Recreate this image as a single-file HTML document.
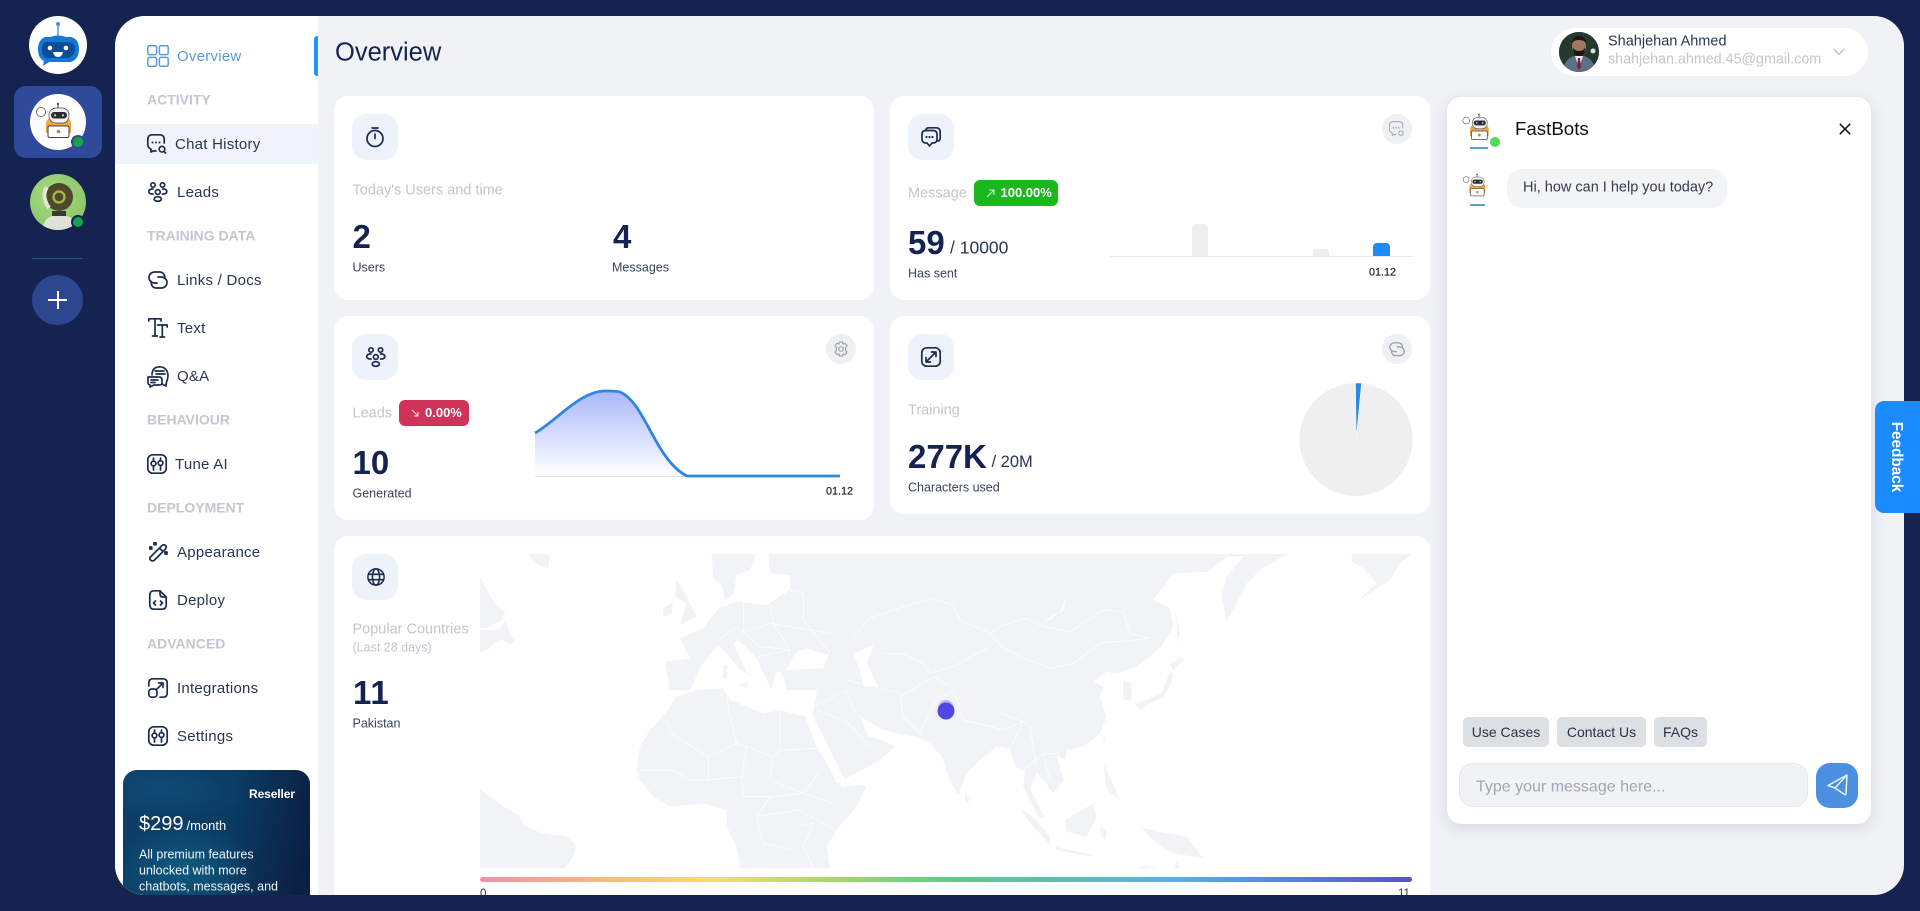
<!DOCTYPE html>
<html lang="en"><head><meta charset="utf-8"><title>Overview</title>
<style>
*{box-sizing:border-box}
html,body{margin:0;padding:0;width:1920px;height:911px;overflow:hidden;background:#14234f;font-family:"Liberation Sans",sans-serif}
.a{position:absolute}
.t{position:absolute;white-space:nowrap;transform:translateY(-50%);line-height:1.2}
#panel{position:absolute;left:115px;top:16px;width:1789px;height:879px;background:#f0f2f6;border-radius:30px;overflow:hidden}
#inner{position:absolute;left:-115px;top:-16px;width:1920px;height:911px}
.nav{font-size:15px;letter-spacing:.25px;color:#2a3553;margin-top:1px}
.sec{font-size:14px;font-weight:bold;color:#c3c7cf}
.card{position:absolute;background:#fff;border-radius:14px}
.ib{position:absolute;width:46px;height:46px;border-radius:14px;background:#eef2fa}
.cb{position:absolute;width:30px;height:30px;border-radius:50%;background:#eff0f4}
.lab{font-size:14.5px;color:#c2c6cd;margin-top:1px}
.big{font-size:33px;font-weight:bold;color:#14234f}
.sub{font-size:12.5px;color:#3a4358}
.sm{font-size:17.5px;color:#2a3553}
.bd{position:absolute;height:26px;border-radius:6px;color:#fff;font-weight:bold;font-size:13px}
.ch{position:absolute;top:717px;height:30px;border-radius:5px;background:#dcdfe3;font-size:14px;color:#2b3347;line-height:30px;text-align:center}
svg{position:absolute;overflow:visible}
.s{fill:none;stroke:#1e2b4f;stroke-width:1.7;stroke-linecap:round;stroke-linejoin:round}
.g{fill:none;stroke:#9ea3ad;stroke-width:1.2;stroke-linecap:round;stroke-linejoin:round}
</style></head>
<body>
<svg width="0" height="0" style="position:absolute">
<defs>
<symbol id="bot" viewBox="-28 -28 56 56" overflow="visible">
 <circle cx="-17" cy="-10" r="4.6" fill="#fff" stroke="#555" stroke-width=".8"/>
 <path d="M-12 3 Q-12 -5 -4 -4 L6 -4 Q13 -5 13 3 L13 11 L-12 11Z" fill="#f0a63a"/>
 <path d="M0 -14V-18" stroke="#333" stroke-width="1"/><circle cx="0" cy="-18" r="1.2" fill="#555"/>
 <rect x="-9" y="-14" width="20" height="15" rx="7" fill="#f4f4f4" stroke="#444" stroke-width=".7"/>
 <rect x="-7" y="-10" width="16" height="6.500" rx="3" fill="#2b2b33"/>
 <circle cx="-3" cy="-6.700" r="1.1" fill="#ddd"/><circle cx="5" cy="-6.700" r="1.1" fill="#ddd"/>
 <rect x="-10" y="4" width="21" height="11.500" rx="1.5" fill="#fff" stroke="#444" stroke-width="1"/>
 <circle cx="0.5" cy="9.500" r="1.8" fill="#b58a2a"/>
</symbol>
<symbol id="leads" viewBox="0 0 20 20" overflow="visible">
 <g class="s"><circle cx="5" cy="3" r="2.2"/><circle cx="14.5" cy="3" r="2.2"/><circle cx="9.8" cy="10" r="2.4"/><ellipse cx="9.8" cy="17" rx="3.6" ry="2.3"/><path d="M5 7H3.5Q.8 7.5 .8 9.5T3.5 12H5M14.5 7H16Q18.8 7.5 18.8 9.5T16 12H14.5"/></g>
</symbol>
<symbol id="link" viewBox="0 0 20 20" overflow="visible">
 <path d="M9 12H6.500A5.500 5.500 0 0 1 6.500 1H12A5 5 0 0 1 16.500 7.500M10 6H13.500A5.500 5.500 0 0 1 13.500 17H8A5 5 0 0 1 3.500 10.500" fill="none" stroke="currentColor" stroke-width="1.700" stroke-linecap="round"/>
</symbol>
<symbol id="tune" viewBox="0 0 20 20" overflow="visible">
 <g class="s"><rect x=".8" y=".8" width="18.4" height="18.4" rx="5"/><path d="M6.5 4V7M6.5 12V16M13.5 4V6.5M13.5 11.5V16"/><circle cx="6.5" cy="9.5" r="2.4"/><circle cx="13.5" cy="9" r="2.4"/></g>
</symbol>
</defs>
</svg>

<!-- Left rail -->
<div class="a" style="left:29px;top:16px;width:58px;height:58px;border-radius:50%;background:#fff"></div>
<svg style="left:29px;top:16px" width="58" height="58" viewBox="0 0 58 58">
 <path d="M29 8V21" stroke="#4a90d9" stroke-width="1.4"/><circle cx="29" cy="8" r="2" fill="#4a90d9"/>
 <path d="M21 21Q29 18 37 21H42Q50 23 50 33T42 46H20L14 50L15 45Q9 42 9 33T16 21Z" fill="#1478d8"/>
 <path d="M18 26H40Q46 27 46 33T40 42H18Q13 41 13 33T18 26Z" fill="#0e4c96"/>
 <circle cx="21" cy="32" r="2.300" fill="#fff"/><circle cx="37" cy="32" r="2.300" fill="#fff"/>
 <path d="M24 36H34Q33 41 29 41T24 36Z" fill="#fff"/>
</svg>
<div class="a" style="left:14px;top:86px;width:88px;height:72px;border-radius:12px;background:#2f4a9a"></div>
<div class="a" style="left:30px;top:94px;width:56px;height:56px;border-radius:50%;background:#fff"></div>
<svg style="left:30px;top:94px" width="56" height="56"><use href="#bot" width="56" height="56"/></svg>
<div class="a" style="left:71px;top:135px;width:14px;height:14px;border-radius:50%;background:#16a34a;border:2px solid #2f4a9a"></div>
<div class="a" style="left:30px;top:174px;width:56px;height:56px;border-radius:50%;background:radial-gradient(circle at 40% 40%,#a9d988,#8cc868 70%);overflow:hidden"></div>
<svg style="left:30px;top:174px" width="56" height="56" viewBox="0 0 56 56">
 <defs><clipPath id="ast"><circle cx="28" cy="28" r="28"/></clipPath></defs>
 <g clip-path="url(#ast)">
 <path d="M12 56Q14 44 22 42H36Q46 44 48 56Z" fill="#dfe2d6"/><rect x="22" y="37" width="14" height="5" fill="#3a3a34"/>
 <ellipse cx="29" cy="23" rx="14" ry="14" fill="#4c4a2a"/><path d="M17 13Q11 22 19 34" fill="none" stroke="#e4e6d2" stroke-width="4"/>
 <circle cx="29" cy="23" r="5.500" fill="none" stroke="#a8b24a" stroke-width="2.400"/>
 </g>
</svg>
<div class="a" style="left:71px;top:215px;width:14px;height:14px;border-radius:50%;background:#16a34a;border:2px solid #14234f"></div>
<div class="a" style="left:32px;top:258px;width:51px;height:1px;background:#2f4a9a"></div>
<div class="a" style="left:32px;top:275px;width:51px;height:50px;border-radius:50%;background:#2d4690"></div>
<div class="a" style="left:48px;top:299px;width:19px;height:1.6px;background:#fff"></div>
<div class="a" style="left:57px;top:291px;width:1.6px;height:18px;background:#fff"></div>

<div id="panel"><div id="inner">
 <!-- Sidebar -->
 <div class="a" style="left:115px;top:0;width:203px;height:911px;background:#fff"></div>
 <div class="a" style="left:314px;top:36px;width:4px;height:40px;background:#2196f3;border-radius:3px 0 0 3px"></div>
 <div class="a" style="left:115px;top:124px;width:203px;height:40px;background:#f0f3f9"></div>

 <svg style="left:147px;top:45px" width="22" height="22" fill="none" stroke="#5a9bd8" stroke-width="1.5"><rect x=".8" y=".8" width="8.8" height="8.8" rx="1.5"/><rect x="12.4" y=".8" width="8.8" height="8.8" rx="1.5"/><rect x=".8" y="12.4" width="8.8" height="8.8" rx="1.5"/><rect x="12.4" y="12.4" width="8.8" height="8.8" rx="1.5"/></svg>
 <div class="t nav" style="left:177px;top:56px;color:#5a9bd8">Overview</div>
 <div class="t sec" style="left:147px;top:100px">ACTIVITY</div>

 <svg class="s" style="left:147px;top:134px" width="20" height="20" viewBox="0 0 20 20"><path d="M9 17H6L4 18V15Q1 14 .8 11V5Q1 1 5 .8H13Q17 1 17.2 5V9"/><path d="M5.5 8.5h.01M9 8.5h.01M12.5 8.5h.01" stroke-width="2"/><circle cx="15" cy="15.2" r="2.8"/><path d="M17 17.4L18.6 19"/></svg>
 <div class="t nav" style="left:175px;top:144px">Chat History</div>
 <svg style="left:148px;top:182px" width="20" height="20"><use href="#leads" width="20" height="20"/></svg>
 <div class="t nav" style="left:177px;top:192px">Leads</div>
 <div class="t sec" style="left:147px;top:236px">TRAINING DATA</div>
 <svg style="left:148px;top:271px;color:#1e2b4f" width="20" height="20"><use href="#link" width="20" height="20"/></svg>
 <div class="t nav" style="left:177px;top:280px">Links / Docs</div>
 <svg class="s" style="left:148px;top:318px" width="20" height="20" viewBox="0 0 20 20"><path d="M.8 3V.8H13V3M7 .8V18M4.5 18H9.5M9.5 7H19.2V9M14.3 7V19M12 19H16.5"/></svg>
 <div class="t nav" style="left:177px;top:328px">Text</div>
 <svg class="s" style="left:147px;top:366px" width="22" height="22" viewBox="0 0 22 22"><path d="M5 9Q5 1 12.5 .8Q20 1 21 9Q21 13 19.5 16L19 20L15 18"/><path d="M8 5H17M9 8H18"/><path d="M1 11H12Q15 11 15 14V17Q15 19 12 19H7L3 21V19Q1 18.5 1 17Z"/><path d="M4 14H11M4 16.5H8"/></svg>
 <div class="t nav" style="left:177px;top:376px">Q&amp;A</div>
 <div class="t sec" style="left:147px;top:420px">BEHAVIOUR</div>
 <svg style="left:147px;top:454px" width="20" height="20"><use href="#tune" width="20" height="20"/></svg>
 <div class="t nav" style="left:175px;top:464px">Tune AI</div>
 <div class="t sec" style="left:147px;top:508px">DEPLOYMENT</div>
 <svg class="s" style="left:149px;top:542px" width="19" height="20" viewBox="0 0 19 20"><path d="M1.5 15L13 3.5Q15 2 16.5 3.5T16.500 7L5 18.500Q3 19.500 1.500 18T1.500 15ZM10.500 6L14 9.500"/><path d="M5 .8h2v2H5zM.8 5h2v2h-2zM16 10h2v2h-2z" fill="#1e2b4f"/></svg>
 <div class="t nav" style="left:177px;top:552px">Appearance</div>
 <svg class="s" style="left:149px;top:590px" width="18" height="20" viewBox="0 0 18 20"><path d="M11 .8H5Q.8 .8 .8 5V15Q.8 19.200 5 19.200H13Q17.200 19.200 17.200 15V7H14Q11 7 11 4Z"/><path d="M11 .8L17.200 7M6.500 11L4.500 13L6.500 15M11.500 11L13.500 13L11.500 15"/></svg>
 <div class="t nav" style="left:177px;top:600px">Deploy</div>
 <div class="t sec" style="left:147px;top:644px">ADVANCED</div>
 <svg class="s" style="left:148px;top:678px" width="20" height="20" viewBox="0 0 20 20"><path d="M.8 8V5Q.8 .8 5 .8H15Q19.200 .8 19.200 5V15Q19.200 19.200 15 19.200H12"/><rect x=".8" y="11" width="8.200" height="8.200" rx="3"/><path d="M9 11L15 5M10.500 5H15V9.500"/></svg>
 <div class="t nav" style="left:177px;top:688px">Integrations</div>
 <svg style="left:148px;top:726px" width="20" height="20"><use href="#tune" width="20" height="20"/></svg>
 <div class="t nav" style="left:177px;top:736px">Settings</div>

 <div class="a" style="left:123px;top:770px;width:187px;height:140px;border-radius:14px;overflow:hidden;background:radial-gradient(ellipse 70px 50px at 60px 100px,#0f5a7d,transparent),radial-gradient(ellipse 90px 30px at 40px 20px,#0f4a74,transparent),linear-gradient(100deg,#0e3e68,#0b3b63 55%,#0b1f41 95%)"></div>
 <div class="t" style="left:249px;top:794px;font-size:12px;letter-spacing:-.1px;font-weight:bold;color:#fff">Reseller</div>
 <div class="t" style="left:139px;top:824px;font-size:20px;color:#fff">$299<span style="font-size:13px;margin-left:3px">/month</span></div>
 <div class="t" style="left:139px;top:854.500px;font-size:12.500px;color:#eef4f8">All premium features</div>
 <div class="t" style="left:139px;top:870.500px;font-size:12.500px;color:#eef4f8">unlocked with more</div>
 <div class="t" style="left:139px;top:886.500px;font-size:12.500px;color:#eef4f8">chatbots, messages, and</div>

 <!-- Header -->
 <div class="t" style="left:335px;top:53px;font-size:25.500px;color:#14234f">Overview</div>
 <div class="a" style="left:1551px;top:28px;width:317px;height:48px;border-radius:24px;background:#fff"></div>
 <div class="a" style="left:1559px;top:32px;width:40px;height:40px;border-radius:50%;background:#1f3a2c;overflow:hidden"></div>
 <svg style="left:1559px;top:32px" width="40" height="40" viewBox="0 0 40 40"><defs><clipPath id="av"><circle cx="20" cy="20" r="20"/></clipPath></defs><g clip-path="url(#av)"><rect width="40" height="40" fill="#25392f"/><path d="M4 40Q5 27 15 24L25 24Q35 27 37 40Z" fill="#5d6e88"/><path d="M16 24L20 36L24 24Z" fill="#e9e9ec"/><path d="M19 26H21L22 35L20 38L18 35Z" fill="#7c2434"/><ellipse cx="20" cy="14" rx="7" ry="9" fill="#a07a60"/><path d="M13 12Q13 4 20 4T27 12Q26 8 20 8T13 12ZM14 15Q14 24 20 24T26 15Q25 19 20 19T14 15Z" fill="#1c1512"/><circle cx="34" cy="19" r="2.500" fill="#cfe4e4"/></g></svg>
 <div class="t" style="left:1608px;top:41.500px;font-size:14.500px;color:#2a3553">Shahjehan Ahmed</div>
 <div class="t" style="left:1608px;top:59.500px;font-size:14.300px;color:#c2c6cd">shahjehan.ahmed.45@gmail.com</div>
 <svg style="left:1833px;top:48px" width="12" height="8" fill="none" stroke="#c2c6cd" stroke-width="1.500"><path d="M.8 1L6 6.500L11.200 1"/></svg>

 <!-- Card 1 -->
 <div class="card" style="left:334px;top:96px;width:540px;height:204px"></div>
 <div class="ib" style="left:352px;top:114px"></div>
 <svg class="s" style="left:366px;top:126px" width="18" height="22" viewBox="0 0 18 22"><circle cx="9" cy="12.500" r="8"/><path d="M6 2H12M9 8V12.500"/></svg>
 <div class="t lab" style="left:352.500px;top:190px">Today's Users and time</div>
 <div class="t big" style="left:352.500px;top:237px">2</div>
 <div class="t big" style="left:613px;top:237px">4</div>
 <div class="t sub" style="left:352.500px;top:268px">Users</div>
 <div class="t sub" style="left:612px;top:268px">Messages</div>

 <!-- Card 2 -->
 <div class="card" style="left:890px;top:96px;width:540px;height:204px"></div>
 <div class="ib" style="left:908px;top:114px"></div>
 <svg class="s" style="left:921px;top:127px" width="20" height="20" viewBox="0 0 20 20"><path d="M5 3V3Q5 .8 8 .8H15Q19.200 .8 19.200 5V11Q19.200 14 16.500 14"/><path d="M5 3.500H12Q16 3.500 16 7.500V12Q16 16 12 16H11L8.500 19L6 16H5Q1 16 1 12V7.500Q1 3.500 5 3.500Z"/><path d="M5.500 10h.01M8.500 10h.01M11.500 10h.01" stroke-width="2.200"/></svg>
 <div class="cb" style="left:1382px;top:114px"></div>
 <svg class="g" style="left:1389px;top:121px" width="16" height="16" viewBox="0 0 20 20"><path d="M9 17H6L4 18V15Q1 14 .8 11V5Q1 1 5 .8H13Q17 1 17.200 5V9"/><path d="M5.500 8.500h.01M9 8.500h.01M12.500 8.500h.01" stroke-width="2"/><circle cx="15" cy="15.200" r="2.800"/></svg>
 <div class="t lab" style="left:908px;top:193px">Message</div>
 <div class="bd" style="left:974px;top:180px;width:84px;background:#1cb71f"></div>
 <svg style="left:986px;top:189px" width="9" height="9" fill="none" stroke="#cdeccd" stroke-width="1.100"><path d="M1 8L8 1M3 1H8V6"/></svg>
 <div class="t" style="left:1000.500px;top:193px;font-size:13px;font-weight:bold;color:#fff">100.00%</div>
 <div class="t big" style="left:908px;top:243px">59</div>
 <div class="t sm" style="left:950px;top:248px">/ 10000</div>
 <div class="t sub" style="left:908px;top:274px">Has sent</div>
 <div class="a" style="left:1110px;top:256px;width:302px;height:1px;background:#e3e5ea"></div>
 <div class="a" style="left:1192px;top:224px;width:16px;height:32px;background:#eeeff1;border-radius:4px 4px 0 0"></div>
 <div class="a" style="left:1313px;top:249px;width:16px;height:7px;background:#eeeff1;border-radius:3px 3px 0 0"></div>
 <div class="a" style="left:1373px;top:243px;width:17px;height:13px;background:#1a8cff;border-radius:4px 4px 0 0"></div>
 <div class="t" style="left:1369px;top:273px;font-size:10.800px;color:#1a2030;-webkit-text-stroke:.2px #1a2030">01.12</div>

 <!-- Card 3 -->
 <div class="card" style="left:334px;top:316px;width:540px;height:204px"></div>
 <div class="ib" style="left:352px;top:334px"></div>
 <svg style="left:366px;top:347px" width="20" height="20"><use href="#leads" width="20" height="20"/></svg>
 <div class="cb" style="left:826px;top:334px"></div>
 <svg class="g" style="left:833px;top:341px" width="16" height="16" viewBox="0 0 16 16"><circle cx="8" cy="8" r="2.300"/><path d="M6.500 1H9.500L10 3L12 2.300L14 5L12.600 6.500V9.500L14 11L12 13.700L10 13L9.500 15H6.500L6 13L4 13.700L2 11L3.400 9.500V6.500L2 5L4 2.300L6 3Z"/></svg>
 <div class="t lab" style="left:352.500px;top:412.500px">Leads</div>
 <div class="bd" style="left:399px;top:400px;width:70px;background:#cf3358"></div>
 <svg style="left:411px;top:409px" width="8" height="8" fill="none" stroke="#f5d0da" stroke-width="1.100"><path d="M1 1L7 7M3 7H7V3"/></svg>
 <div class="t" style="left:425px;top:413px;font-size:13px;font-weight:bold;color:#fff">0.00%</div>
 <div class="t big" style="left:352.500px;top:463px">10</div>
 <div class="t sub" style="left:352.500px;top:494px">Generated</div>
 <svg style="left:0;top:0" width="1920" height="911">
  <defs><linearGradient id="ar" x1="0" y1="0" x2="0" y2="1"><stop offset="0" stop-color="#a9b8fb"/><stop offset="1" stop-color="#ffffff"/></linearGradient></defs>
  <path d="M535 433C555 422 580 391 605 391C612 391 617 391 620 392C645 402 655 460 687 476L535 476Z" fill="url(#ar)"/>
  <path d="M535 476.500H687" stroke="#e1e3e8" stroke-width="1"/>
  <path d="M535 433C555 422 580 391 605 391C612 391 617 391 620 392C645 402 655 460 687 476L840 476" fill="none" stroke="#2f86e0" stroke-width="2.800"/>
 </svg>
 <div class="t" style="left:826px;top:492px;font-size:10.800px;color:#1a2030;-webkit-text-stroke:.2px #1a2030">01.12</div>

 <!-- Card 4 -->
 <div class="card" style="left:890px;top:316px;width:540px;height:198px"></div>
 <div class="ib" style="left:908px;top:334px"></div>
 <svg class="s" style="left:921px;top:347px" width="20" height="20" viewBox="0 0 20 20"><rect x=".8" y=".8" width="18.400" height="18.400" rx="5"/><path d="M5 15L15 5M10.500 5H15V9.500M5 10.500V15H9.500"/></svg>
 <div class="cb" style="left:1382px;top:334px"></div>
 <svg style="left:1389px;top:342px;color:#9ea3ad" width="16" height="16"><use href="#link" width="16" height="16"/></svg>
 <div class="t lab" style="left:908px;top:409.500px">Training</div>
 <div class="t big" style="left:908px;top:457px">277K</div>
 <div class="t" style="left:991.500px;top:463px;font-size:16.500px;color:#2a3553">/ 20M</div>
 <div class="t sub" style="left:908px;top:488px">Characters used</div>
 <svg style="left:0;top:0" width="1920" height="911"><circle cx="1356" cy="439.500" r="56.500" fill="#efeff0"/><path d="M1355.500 383H1361.500L1356.300 438Z" fill="#2f86e0" stroke="#fff" stroke-width=".5"/></svg>

 <!-- Map card -->
 <div class="card" style="left:334px;top:536px;width:1096px;height:380px"></div>
 <div class="ib" style="left:352px;top:554px"></div>
 <svg class="s" style="left:367px;top:568px" width="18" height="18" viewBox="0 0 20 20"><circle cx="10" cy="10" r="9"/><ellipse cx="10" cy="10" rx="4" ry="9"/><path d="M1.500 7H18.500M1.500 13H18.500"/></svg>
 <div class="t lab" style="left:352.500px;top:629px">Popular Countries</div>
 <div class="t" style="left:352.500px;top:648px;font-size:12.500px;color:#c2c6cd">(Last 28 days)</div>
 <div class="t big" style="left:353px;top:693px;letter-spacing:.8px">11</div>
 <div class="t sub" style="left:352.500px;top:724px">Pakistan</div>

 <svg style="left:0;top:0" width="1920" height="911">
  <defs><clipPath id="mc"><rect x="30" y="42" width="2795" height="943"/></clipPath></defs>
  <g transform="translate(470 540) scale(.33333)" clip-path="url(#mc)">
   <g fill="#f1f3f7">
    <path d="M172 42H240L235 85L205 75Z"/>
    <path d="M30 110L50 150L75 190L105 215L95 240L55 262L30 265Z"/>
    <path d="M30 270H85L105 245L120 280L135 305L120 312L95 298L70 310L60 325L30 340Z"/>
    <path d="M30 745L60 770L100 800L145 825L165 860L220 880L290 890L318 915L310 950L285 985H30Z"/>
    <path d="M725 42H860L840 90L800 105L790 165L765 180L755 135L730 115Z"/>
    <path d="M895 42H2455L2375 85L2330 130L2300 190L2270 245L2255 170L2270 110L2320 50H2270L2215 95L2110 100L2050 180L2100 205L2110 260L2075 320L2040 350L2000 380L1945 400L1910 395L1870 425L1900 440L1890 470L1910 530L1890 580L1840 620L1790 630L1785 660L1760 645L1780 720L1750 760L1720 720L1700 700L1680 745L1725 835L1705 830L1660 740L1665 690L1635 680L1620 625L1580 620L1530 660L1490 700L1465 765L1440 720L1415 650L1380 610L1340 590L1300 585L1240 570L1170 530L1195 590L1235 600L1275 620L1230 660L1120 720L1100 700L1040 570L1028 525L1040 455L1040 450L950 450L945 420L930 395L915 400L905 450L880 400L860 355L805 300L790 310L830 395L850 410L810 390L770 340L745 315L720 345L695 375L660 450L600 450L585 365L660 355L630 295L700 265L745 205L800 185L890 195L960 150L960 105L900 100Z"/>
    <path d="M1005 530L1040 620L1090 700L1115 740L1190 735L1160 800L1100 870L1070 920L1080 985H810L800 920L770 860L770 810L700 790L600 800L550 770L510 720L500 690L510 620L540 570L585 520L620 470L680 450L760 445L780 480L880 520L930 510Z"/>
    <path d="M620 120L640 150L680 230L630 255L650 190L615 170Z"/>
    <path d="M580 205L610 185L605 225L578 230Z"/>
    <path d="M760 375L772 375L770 415L760 415Z"/><path d="M805 435L835 425L830 445Z"/>
    <path d="M1485 760L1498 775L1495 790L1485 785Z"/>
    <path d="M1995 490L2040 475L2075 460L2100 395L2110 400L2100 440L2080 470L2040 490L2010 510Z"/>
    <path d="M2100 375L2130 350L2145 360L2110 390Z"/>
    <path d="M2115 210L2130 280L2120 310L2120 250Z"/>
    <path d="M1900 590L1910 590L1900 615Z"/>
    <path d="M1900 670L1915 700L1950 780L1910 750Z"/>
    <path d="M1785 840L1870 790L1880 830L1850 890L1790 875Z"/>
    <path d="M1645 800L1700 840L1740 890L1740 915L1690 860Z"/>
    <path d="M1755 920L1870 945L1860 950L1760 930Z"/>
    <path d="M1890 860L1910 870L1905 905L1895 890Z"/>
    <path d="M2010 860L2060 875L2150 890L2200 955L2110 940L2060 910Z"/>
    <path d="M2000 985L2060 985L2030 975Z"/><path d="M2110 985H2130L2120 965Z"/>
    <path d="M2645 42H2825L2790 70L2760 120L2660 185L2720 130L2680 85L2645 65Z"/>
   </g>
   <g fill="#fff">
    <path d="M950 390L980 335L1010 325L1075 345L1060 385Z"/>
    <path d="M1150 340L1210 315L1190 370L1225 440L1180 440L1170 390Z"/>
    <path d="M1725 240L1770 215L1790 170L1780 210L1740 240Z"/>
    <path d="M1005 530L1028 525L1125 720L1100 730Z"/>
    <path d="M1960 420L1985 430L1985 480L1960 480Z" fill="#f1f3f7"/>
   </g>
   <g fill="none" stroke="#fff" stroke-width="2" stroke-linejoin="round">
    <path d="M1560 280L1600 255L1670 235L1720 260L1800 275L1900 210L1960 215L1980 280L2040 295L1890 310L1810 370L1740 385L1640 345L1595 320Z"/>
    <path d="M1150 290L1200 235L1300 200L1385 175L1450 195L1470 240L1560 280"/>
    <path d="M1240 340L1300 340L1360 370L1380 400L1450 380L1560 320"/>
    <path d="M1130 420L1290 460L1300 530L1350 580L1400 480L1450 450L1480 540L1600 570L1660 545L1680 560L1700 680"/>
    <path d="M1290 470L1390 410L1440 440"/>
    <path d="M1030 500L1130 450L1150 510L1170 530M1040 510L1130 545L1200 620"/>
    <path d="M1080 340L1000 240L1000 160L960 150M820 190L820 280L900 250L1080 280M900 190L910 250L960 330L870 320L800 260L745 300M860 350L960 330L960 390"/>
    <path d="M770 440L775 510L800 610L715 650L610 585L585 540M930 510L930 630L1040 625M800 610L830 620L910 650L930 630M715 650L715 720L660 720L610 690L510 690M830 620L815 710L820 770M910 650L900 720L1000 760L1045 700M715 720L820 710M820 770L900 770L1000 760M1000 760L1090 790M900 770L860 830L985 810L1100 870M980 860L1030 850L1000 920L1030 985M860 830L880 910L970 930"/>
    <path d="M1590 520L1660 545L1620 625M1660 690L1720 640L1770 640M1720 640L1740 720"/>
   </g>
  </g>
  <circle cx="946" cy="708" r="8" fill="#8d89ee" opacity=".55"/>
  <circle cx="946" cy="711" r="8.500" fill="#5048e0"/>
  <defs><linearGradient id="lg" x1="0" y1="0" x2="1" y2="0"><stop offset="0" stop-color="#f191a5"/><stop offset=".25" stop-color="#f5e063"/><stop offset=".5" stop-color="#5fcc83"/><stop offset=".75" stop-color="#5aaee8"/><stop offset="1" stop-color="#5b4ed0"/></linearGradient></defs>
  <rect x="480" y="877" width="932" height="5" rx="2.500" fill="url(#lg)"/>
 </svg>
 <div class="t" style="left:480px;top:895px;font-size:11.500px;color:#333">0</div>
 <div class="t" style="left:1398px;top:895px;font-size:11.500px;color:#333">11</div>

 <!-- Chat -->
 <div class="card" style="left:1447px;top:97px;width:424px;height:727px;box-shadow:0 4px 16px rgba(20,30,60,.12)"></div>
 <svg style="left:1458px;top:107px" width="42" height="42"><use href="#bot" width="42" height="42"/></svg>
 <div class="a" style="left:1470px;top:147px;width:18px;height:1.500px;background:#5aa3c7"></div>
 <div class="a" style="left:1490px;top:137px;width:10px;height:10px;border-radius:50%;background:#4ade50"></div>
 <div class="t" style="left:1515px;top:129px;font-size:18.700px;color:#111">FastBots</div>
 <svg style="left:1839px;top:123px" width="12" height="12" stroke="#111" stroke-width="1.500"><path d="M.8 .8L11.200 11.200M11.200 .8L.8 11.200"/></svg>
 <svg style="left:1459px;top:167.500px" width="36" height="36"><use href="#bot" width="36" height="36"/></svg>
 <div class="a" style="left:1470px;top:204px;width:15px;height:1.500px;background:#5aa3c7"></div>
 <div class="a" style="left:1507px;top:169px;width:220px;height:39px;border-radius:15px;background:#f3f4f6"></div>
 <div class="t" style="left:1523px;top:188px;font-size:14.500px;color:#333a4a">Hi, how can I help you today?</div>
 <div class="ch" style="left:1463px;width:86px">Use Cases</div>
 <div class="ch" style="left:1557px;width:89px">Contact Us</div>
 <div class="ch" style="left:1654px;width:53px">FAQs</div>
 <div class="a" style="left:1459px;top:763px;width:349px;height:44px;border-radius:14px;background:#f0f2f6;border:1px solid #e6e8ec"></div>
 <div class="t" style="left:1476px;top:787px;font-size:16px;color:#a2a7b1">Type your message here...</div>
 <div class="a" style="left:1816px;top:763px;width:42px;height:45px;border-radius:14px;background:#4a8fe0"></div>
 <svg style="left:1827px;top:774px" width="21" height="22" viewBox="0 0 21 22" fill="none" stroke="#e8f2fc" stroke-width="1.500" stroke-linejoin="round"><path d="M20 1L1 11.500L8 14L17.500 20.500Q19 21 19 19.500ZM20 1L8 14"/></svg>
</div></div>

<!-- Feedback -->
<div class="a" style="left:1875px;top:401px;width:45px;height:112px;background:#1a8cff;border-radius:9px 0 0 9px"></div>
<div class="a" style="left:1895.500px;top:457px;transform:translate(-50%,-50%) rotate(90deg);font-size:15.300px;font-weight:bold;color:#fff;white-space:nowrap">Feedback</div>
</body></html>
